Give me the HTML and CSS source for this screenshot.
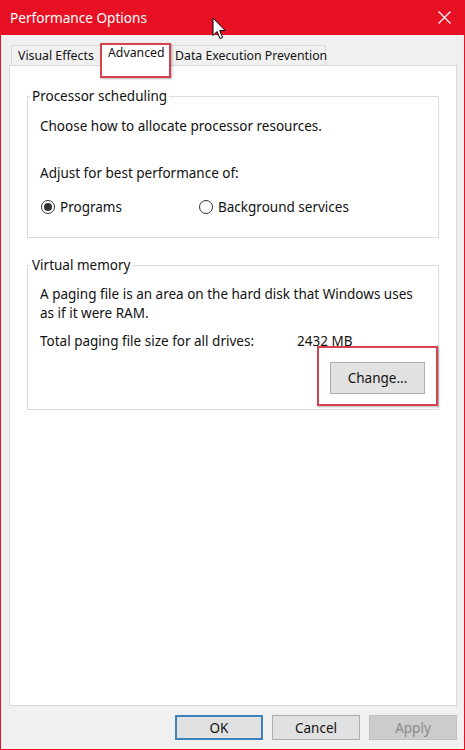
FILE: index.html
```html
<!DOCTYPE html>
<html>
<head>
<meta charset="utf-8">
<link rel="stylesheet" href="styles.css">
</head>
<body>
<div class="window">
  <div class="titlebar">
    <span class="title">Performance Options</span>
    <svg class="close" width="13" height="13" viewBox="0 0 13 13"><path d="M0.5 0.5 L12.5 12.5 M12.5 0.5 L0.5 12.5" stroke="#fff" stroke-width="1.2" fill="none"/></svg>
  </div>
  <svg class="cursor" width="16" height="24" viewBox="0 0 16 24"><path d="M1 1 L1 18.5 L5 14.5 L8 21.5 L10.6 20.4 L7.7 13.6 L13.2 13.6 Z" fill="#fff" stroke="#000" stroke-width="1" stroke-linejoin="round"/></svg>
  <div class="content">
    <div class="tabs">
      <div class="tab tab-ve">Visual Effects</div>
      <div class="tab tab-adv selected annot-tab">Advanced</div>
      <div class="tab tab-dep">Data Execution Prevention</div>
    </div>
    <div class="pane">
      <fieldset class="group group-cpu">
        <legend>Processor scheduling</legend>
        <p class="line choose">Choose how to allocate processor resources.</p>
        <p class="line adjust">Adjust for best performance of:</p>
        <div class="radios">
          <label class="radio radio-prog"><span class="dot checked"></span>Programs</label>
          <label class="radio radio-bg"><span class="dot"></span>Background services</label>
        </div>
      </fieldset>
      <fieldset class="group group-vm">
        <legend>Virtual memory</legend>
        <p class="line para">A paging file is an area on the hard disk that Windows uses as if it were RAM.</p>
        <div class="line total"><span class="total-label">Total paging file size for all drives:</span><span class="total-val">2432 MB</span></div>
        <div class="change-row">
          <button class="btn change annot-btn">Change...</button>
        </div>
      </fieldset>
    </div>
    <div class="buttons">
      <button class="btn ok">OK</button>
      <button class="btn">Cancel</button>
      <button class="btn disabled">Apply</button>
    </div>
  </div>
</div>
</body>
</html>
```
FILE: styles.css
```css
* { box-sizing: border-box; }
html, body { margin: 0; padding: 0; background: #fff; }
body { font-family: "Noto Sans", "Open Sans", sans-serif; color: #111; }

.window {
  position: relative;
  width: 465px;
  height: 750px;
  background: #f0f0f0;
  border: 1px solid #e81123;
  border-top: none;
  display: flex;
  flex-direction: column;
}

.titlebar {
  height: 35px;
  background: #e81123;
  margin: 0 -1px;
  display: flex;
  align-items: center;
  justify-content: space-between;
  padding: 0 14px 0 10px;
  color: #fff;
  flex: none;
}
.title { font-size: 13.6px; }
.close { display: block; margin-top: 0; }

.cursor { position: absolute; left: 211px; top: 17px; }

.content {
  flex: 1;
  display: flex;
  flex-direction: column;
  padding: 10px 7px 9px 8px;
  min-height: 0;
}

.tabs {
  height: 20px;
  display: flex;
  align-items: flex-end;
  padding-left: 2px;
  font-size: 12.3px;
  position: relative;
  z-index: 1;
}
.tab {
  height: 20px;
  border: 1px solid #d9d9d9;
  border-bottom: none;
  background: #f0f0f0;
  display: flex;
  align-items: center;
  padding-left: 6px;
  white-space: nowrap;
}
.tab-ve { width: 89px; border-right: none; }
.tab-dep { width: 156px; border-left: none; padding-left: 5px; }
.tab.selected {
  width: 70px;
  height: 23px;
  margin-bottom: -1px;
  background: #fff;
  padding-left: 7px;
  padding-bottom: 5px;
  position: relative;
}
.annot-tab::after {
  content: "";
  position: absolute;
  left: -1px; right: -2px; top: -1px; bottom: -12px;
  border: 2px solid #d4434d;
  box-shadow: 1px 1px 2px rgba(0,0,0,0.3);
}

.pane {
  flex: 1;
  background: #fff;
  border: 1px solid #d9d9d9;
  padding: 21px 17px 0 17px;
}

.group {
  margin: 0;
  padding: 0 12px;
  border: 1px solid #dcdcdc;
  font-size: 13.5px;
}
.group legend {
  padding: 0 2px;
  margin-left: -10px;
  line-height: 19px;
  font-size: 13.5px;
}
.line { margin: 0; line-height: 19px; }
.group-cpu { padding-bottom: 21px; }
.choose { margin-top: 11px; }
.adjust { margin-top: 28px; }
.radios { margin-top: 14px; display: flex; height: 19px; align-items: center; }
.radio { display: flex; align-items: center; }
.radio-prog { width: 158px; }
.dot {
  width: 14px; height: 14px;
  border: 1px solid #333;
  border-radius: 50%;
  margin: 0 5px 0 1px;
  display: flex;
  align-items: center;
  justify-content: center;
}
.dot.checked::before {
  content: "";
  width: 8px; height: 8px;
  border-radius: 50%;
  background: #333;
}

.group-vm { margin-top: 18px; padding-bottom: 15px; padding-right: 13px; }
.para { margin-top: 10px; padding-right: 8px; }
.total { margin-top: 9px; display: flex; }
.total-label { width: 257px; }
.change-row { display: flex; justify-content: flex-end; margin-top: 11px; }

.btn {
  font-family: inherit;
  font-size: 13.5px;
  color: #111;
  background: #e1e1e1;
  border: 1px solid #adadad;
  padding: 0;
  margin: 0;
}
.change { width: 95px; height: 32px; position: relative; }
.annot-btn::after {
  content: "";
  position: absolute;
  left: -14px; right: -14px; top: -17px; bottom: -13px;
  border: 2px solid #d4434d;
  box-shadow: 1px 1px 2px rgba(0,0,0,0.3);
}

.buttons {
  margin-top: 9px;
  height: 25px;
  display: flex;
  justify-content: flex-end;
  gap: 9px;
  flex: none;
}
.buttons .btn { width: 88px; height: 25px; }
.btn.ok { border: 2px solid #3f83bd; }
.btn.disabled { background: #cccccc; border-color: #bfbfbf; color: #8a8a8a; }
```
